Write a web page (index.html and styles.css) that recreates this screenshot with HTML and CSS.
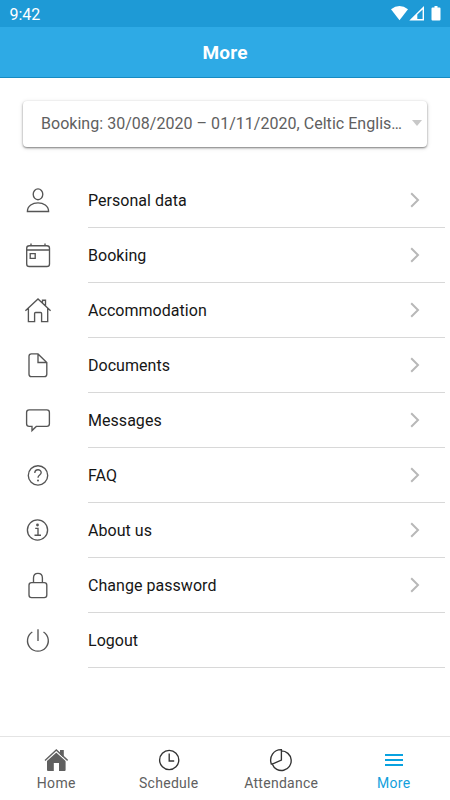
FILE: index.html
```html
<!DOCTYPE html>
<html lang="en">
<head>
<meta charset="utf-8">
<title>More</title>
<link rel="stylesheet" href="styles.css">
</head>
<body>
<div class="app">
  <div class="status">
    <span class="time">9:42</span>
    <svg class="indicators" width="52" height="16" viewBox="0 0 52 16">
      <path d="M0 3.2Q8.5-3 17 3.2L8.5 14.2Z"/>
      <path fill-rule="evenodd" d="M33 0V14.4H18.3ZM31.6 3.4V13H26.3V8.6Z"/>
      <path d="M43.5 0h3v1.5h2q1 0 1 1v10.9q0 1-1 1h-7q-1 0-1-1V2.5q0-1 1-1h2z"/>
    </svg>
  </div>
  <header class="header"><h1>More</h1></header>
  <div class="select"><span class="select-text">Booking: 30/08/2020 – 01/11/2020, Celtic Englis…</span><span class="caret"></span></div>
  <nav class="list">
    <a class="row">
      <svg class="icon" viewBox="0 0 28 28"><ellipse cx="14" cy="8.3" rx="4.8" ry="5.4"/><path d="M3.4 25.5C3.4 13.9 24.6 13.9 24.6 25.5Z"/></svg>
      <span class="cell">Personal data<svg class="chev" viewBox="0 0 10 16"><path d="M1.2 1.2L8 8L1.2 14.8"/></svg></span>
    </a>
    <a class="row">
      <svg class="icon" viewBox="0 0 28 28"><rect x="2.7" y="4.7" width="22.8" height="20.8" rx="2.6"/><path d="M3 9H25M7 2.5V5M21 2.5V5M6.2 12.6h5v4.8h-5z"/></svg>
      <span class="cell">Booking<svg class="chev" viewBox="0 0 10 16"><path d="M1.2 1.2L8 8L1.2 14.8"/></svg></span>
    </a>
    <a class="row">
      <svg class="icon" viewBox="0 0 28 28"><path d="M1.4 14.8L14 3L26.6 14.8M4.4 12.5V25.6H10.6V17.5q0-1 1-1h5q1 0 1 1V25.6H23.7V12.5M18.5 7V4.2H21.5V9.6"/></svg>
      <span class="cell">Accommodation<svg class="chev" viewBox="0 0 10 16"><path d="M1.2 1.2L8 8L1.2 14.8"/></svg></span>
    </a>
    <a class="row">
      <svg class="icon" viewBox="0 0 28 28"><path d="M14 2.9H7.4Q5 2.9 5 5.3V23.2Q5 25.6 7.4 25.6H20.4Q22.8 25.6 22.8 23.2V11.6ZM14 2.9V11.5H22.8"/></svg>
      <span class="cell">Documents<svg class="chev" viewBox="0 0 10 16"><path d="M1.2 1.2L8 8L1.2 14.8"/></svg></span>
    </a>
    <a class="row">
      <svg class="icon" viewBox="0 0 28 28"><path d="M5.2 3.8H22.8Q25.4 3.8 25.4 6.4V17.8Q25.4 20.4 22.8 20.4H12.3L8 24.6V20.4H5.2Q2.6 20.4 2.6 17.8V6.4Q2.6 3.8 5.2 3.8Z"/></svg>
      <span class="cell">Messages<svg class="chev" viewBox="0 0 10 16"><path d="M1.2 1.2L8 8L1.2 14.8"/></svg></span>
    </a>
    <a class="row">
      <svg class="icon" viewBox="0 0 28 28"><circle cx="14" cy="14.4" r="9.7"/><path d="M10.8 12C10.8 7.7 17.2 7.8 17.2 11.6C17.2 14.2 14 13.8 14 16.8"/><circle class="dot" cx="14" cy="19.4" r="1"/></svg>
      <span class="cell">FAQ<svg class="chev" viewBox="0 0 10 16"><path d="M1.2 1.2L8 8L1.2 14.8"/></svg></span>
    </a>
    <a class="row">
      <svg class="icon" viewBox="0 0 28 28"><circle cx="13.5" cy="14" r="10.1"/><path d="M11.2 12.4H14V19M10.5 19.2H17"/><circle class="dot" cx="13.5" cy="9" r="1.4"/></svg>
      <span class="cell">About us<svg class="chev" viewBox="0 0 10 16"><path d="M1.2 1.2L8 8L1.2 14.8"/></svg></span>
    </a>
    <a class="row">
      <svg class="icon" viewBox="0 0 28 28"><rect x="5" y="11.6" width="17.8" height="15" rx="2.6"/><path d="M9.5 11.6V7C9.5.9 18.4.9 18.4 7V11.6"/></svg>
      <span class="cell">Change password<svg class="chev" viewBox="0 0 10 16"><path d="M1.2 1.2L8 8L1.2 14.8"/></svg></span>
    </a>
    <a class="row">
      <svg class="icon" viewBox="0 0 28 28"><path d="M8.3 6A10.4 10.4 0 1 0 19.5 6M14 3.3V15"/></svg>
      <span class="cell">Logout</span>
    </a>
  </nav>
  <footer class="tabs">
    <a class="tab">
      <svg class="tab-icon" viewBox="0 0 24 24"><path class="solid" d="M16 1.9H19.8V9H16ZM3 12L12.3 3.5L21.6 12V22Q21.6 22.9 20.6 22.9H15V15H9.8V22.9H4Q3 22.9 3 22Z"/><path class="gap" d="M1.2 13.9L12.3 3.9L23.4 13.9"/><path class="roof" d="M1 12.4L12.3 2L23.6 12.4"/></svg>
      <span>Home</span>
    </a>
    <a class="tab">
      <svg class="tab-icon" viewBox="0 0 24 24"><circle cx="12.2" cy="12" r="9.6"/><path d="M12.2 5.5V13H17.2"/></svg>
      <span>Schedule</span>
    </a>
    <a class="tab">
      <svg class="tab-icon" viewBox="0 0 24 24"><path d="M12.4 2.9A9.8 9.8 0 1 1 3.2 16.1L12.4 12ZM12.4 2.9V1.7C4.5 1.5-.1 9 2.3 16L3.4 16"/></svg>
      <span>Attendance</span>
    </a>
    <a class="tab active">
      <svg class="tab-icon" viewBox="0 0 24 24"><path d="M3 7H21M3 12H21M3 17H21"/></svg>
      <span>More</span>
    </a>
  </footer>
</div>
</body>
</html>
```
FILE: styles.css
```css
* { box-sizing: border-box; }
body { margin: 0; background: #fff; font-family: Roboto, sans-serif; color: #161616; }
.app { width: 450px; height: 800px; display: flex; flex-direction: column; overflow: hidden; }
.status { height: 27px; background: #1e9ad6; color: #fff; display: flex; justify-content: space-between; align-items: center; padding: 2px 7px 0 9.5px; font-size: 16px; }
.indicators { fill: #fff; margin-top: -1px; }
.header { height: 51px; background: #2eaae5; border-bottom: 1px solid #168bc2; display: flex; align-items: center; justify-content: center; padding-top: 1px; }
h1 { margin: 0; color: #fff; font-size: 19px; letter-spacing: .2px; font-weight: 700; line-height: 24px; }
.select { margin: 23px 23px 26px; height: 46px; flex: none; border-radius: 4px; background: #fff; box-shadow: 0 1px 2px rgba(0,0,0,.45), 0 1px 5px rgba(0,0,0,.14); display: flex; align-items: center; padding: 0 5px 2px 18px; color: #606060; font-size: 16px; }
.select-text { flex: 1; white-space: nowrap; letter-spacing: .03px; }
.caret { border: 5.5px solid transparent; border-top: 6px solid #c8c8c8; border-bottom: 0; }
.list { display: flex; flex-direction: column; }
.row { height: 55px; display: flex; padding: 0 5px 0 24px; }
.icon { width: 28px; height: 28px; margin: 13px 36px 0 0; flex: none; fill: none; stroke: #555; stroke-width: 1.35; }
.dot { fill: #555; stroke: none; }
.cell { flex: 1; display: flex; align-items: center; justify-content: space-between; border-bottom: 1px solid #d8d8d8; font-size: 16px; letter-spacing: .04px; padding-right: 25px; }
.chev { width: 10px; height: 16px; fill: none; stroke: #b8b8b8; stroke-width: 2; }
.tabs { height: 64px; margin-top: auto; border-top: 1px solid #e4e4e4; display: grid; grid-template-columns: repeat(4, 1fr); }
.tab { display: flex; flex-direction: column; align-items: center; padding-top: 11px; font-size: 14px; line-height: 18px; letter-spacing: .28px; color: #606060; }
.tab span { margin-top: 2px; }
.tab-icon { width: 24px; height: 24px; fill: none; stroke: #333; stroke-width: 1.35; }
.tab-icon .solid { fill: #606060; stroke: none; }
.tab-icon .gap { stroke: #fff; stroke-width: 1.2; }
.tab-icon .roof { stroke: #606060; }
.active { color: #139fdc; }
.active .tab-icon { stroke: #09a2e0; stroke-width: 2; }
```
